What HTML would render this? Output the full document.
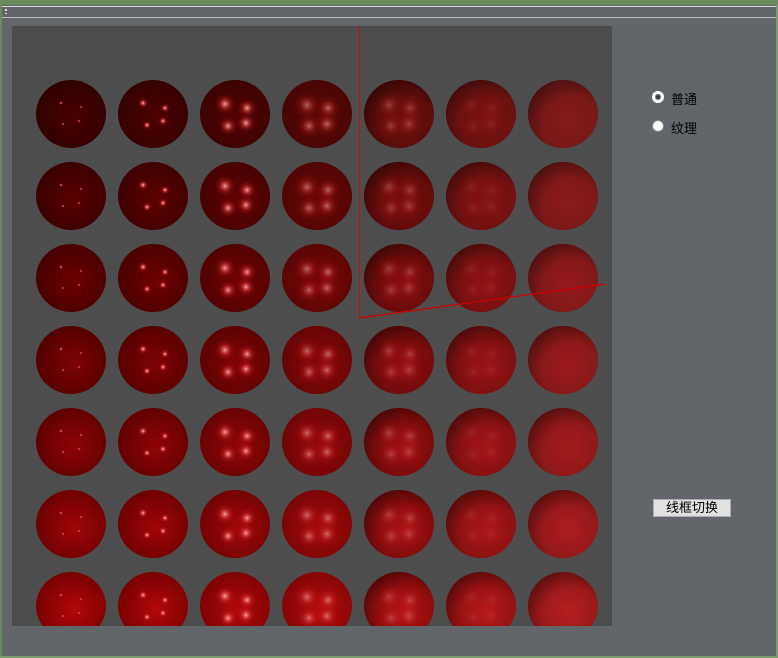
<!DOCTYPE html>
<html><head><meta charset="utf-8"><style>
*{margin:0;padding:0}
body{width:778px;height:658px;background:#62666a;position:relative;overflow:hidden;font-family:"Liberation Sans","Noto Sans CJK SC",sans-serif}
.top{position:absolute;left:0;top:0;width:778px;height:5px;background:#6b8a5e}
.l1{position:absolute;left:0;top:6px;width:778px;height:1px;background:#ddd}
.l2{position:absolute;left:2px;top:17px;width:776px;height:1px;background:#bbb}
.rb{position:absolute;right:0;top:5px;width:2px;height:653px;background:#7a9a70}
.bb{position:absolute;left:0;bottom:0;width:778px;height:2px;background:#7a9a70}
.lb{position:absolute;left:0;top:5px;width:2px;height:653px;background:#6b8a5e}
.radio{position:absolute;left:652px;width:12px;height:12px;border-radius:50%;background:#fff;border:1px solid #888;box-sizing:border-box}
.lab{position:absolute;left:671px;font-size:13px;color:#000}
.btn{position:absolute;left:653px;top:499px;width:78px;height:18px;background:#e1e1e1;border:1px solid #adadad;box-sizing:border-box;font-size:13px;text-align:center;line-height:16px;color:#000}
</style></head><body>
<div class="top"></div><div class="l1"></div><div class="l2"></div><div class="lb"></div><div class="rb"></div><div class="bb"></div>
<div style="position:absolute;left:5px;top:9px;width:2px;height:2px;background:#ddd"></div>
<div style="position:absolute;left:5px;top:13px;width:2px;height:1px;background:#ddd"></div>
<svg style="position:absolute;left:12px;top:26px" width="600" height="600" viewBox="12 26 600 600">
<defs>
<radialGradient id="r0" cx="55%" cy="55%" r="60%"><stop offset="0" stop-color="#4a0000"/><stop offset="1" stop-color="#2e0000"/></radialGradient>
<radialGradient id="r1" cx="55%" cy="55%" r="60%"><stop offset="0" stop-color="#5a0000"/><stop offset="1" stop-color="#380000"/></radialGradient>
<radialGradient id="r2" cx="55%" cy="55%" r="60%"><stop offset="0" stop-color="#6c0000"/><stop offset="1" stop-color="#440000"/></radialGradient>
<radialGradient id="r3" cx="55%" cy="55%" r="60%"><stop offset="0" stop-color="#7e0202"/><stop offset="1" stop-color="#500000"/></radialGradient>
<radialGradient id="r4" cx="55%" cy="55%" r="60%"><stop offset="0" stop-color="#900404"/><stop offset="1" stop-color="#5c0000"/></radialGradient>
<radialGradient id="r5" cx="55%" cy="55%" r="60%"><stop offset="0" stop-color="#a20606"/><stop offset="1" stop-color="#680000"/></radialGradient>
<radialGradient id="r6" cx="55%" cy="55%" r="60%"><stop offset="0" stop-color="#b40808"/><stop offset="1" stop-color="#740000"/></radialGradient>
<radialGradient id="hl"><stop offset="0" stop-color="#ffc8c8"/><stop offset="0.25" stop-color="#ff7070" stop-opacity="0.75"/><stop offset="0.6" stop-color="#e03030" stop-opacity="0.3"/><stop offset="1" stop-color="#d02020" stop-opacity="0"/></radialGradient>
<radialGradient id="sh" cx="62%" cy="65%" r="70%"><stop offset="0" stop-color="#000" stop-opacity="0"/><stop offset="0.6" stop-color="#000" stop-opacity="0.05"/><stop offset="1" stop-color="#000" stop-opacity="0.4"/></radialGradient>
<g id="h0"><circle cx="-10" cy="-11" r="2.2" fill="url(#hl)"/><circle cx="10" cy="-7" r="1.8" fill="url(#hl)"/><circle cx="-8" cy="10" r="1.8" fill="url(#hl)"/><circle cx="8" cy="7" r="1.8" fill="url(#hl)"/></g>
<g id="h1"><ellipse rx="35" ry="34" fill="#a01010" opacity="0.05"/><circle cx="-10" cy="-11" r="5" fill="url(#hl)"/><circle cx="12" cy="-6" r="4.5" fill="url(#hl)"/><circle cx="-6" cy="11" r="4.5" fill="url(#hl)"/><circle cx="10" cy="7" r="4.5" fill="url(#hl)"/></g>
<g id="h2" opacity="0.85"><ellipse rx="35" ry="34" fill="#b01515" opacity="0.12"/><circle cx="-10" cy="-10" r="10" fill="url(#hl)"/><circle cx="12" cy="-6" r="9" fill="url(#hl)"/><circle cx="-7" cy="12" r="9" fill="url(#hl)"/><circle cx="11" cy="9" r="9" fill="url(#hl)"/></g>
<g id="h3" opacity="0.55"><ellipse rx="35" ry="34" fill="#c02020" opacity="0.3"/><circle cx="-10" cy="-9" r="13" fill="url(#hl)"/><circle cx="11" cy="-6" r="12" fill="url(#hl)"/><circle cx="-8" cy="12" r="12" fill="url(#hl)"/><circle cx="10" cy="10" r="12" fill="url(#hl)"/></g>
<g id="h4"><ellipse rx="35" ry="34" fill="#b82424" opacity="0.32"/><g opacity="0.3"><circle cx="-10" cy="-9" r="15" fill="url(#hl)"/><circle cx="11" cy="-6" r="14" fill="url(#hl)"/><circle cx="-8" cy="12" r="14" fill="url(#hl)"/><circle cx="10" cy="10" r="14" fill="url(#hl)"/></g></g>
<g id="h5"><ellipse rx="35" ry="34" fill="#b82828" opacity="0.45"/><g opacity="0.1"><circle cx="-10" cy="-9" r="15" fill="url(#hl)"/><circle cx="11" cy="-6" r="14" fill="url(#hl)"/><circle cx="-8" cy="12" r="14" fill="url(#hl)"/><circle cx="10" cy="10" r="14" fill="url(#hl)"/></g></g>
<g id="h6"><ellipse rx="35" ry="34" fill="#b83030" opacity="0.55"/></g>
</defs>
<rect x="12" y="26" width="600" height="600" fill="#4d4d4d"/>
<g transform="translate(0,114)">
<ellipse cx="71" rx="35" ry="34" fill="url(#r0)"/><use href="#h0" x="71"/>
<ellipse cx="153" rx="35" ry="34" fill="url(#r0)"/><use href="#h1" x="153"/>
<ellipse cx="235" rx="35" ry="34" fill="url(#r0)"/><use href="#h2" x="235"/>
<ellipse cx="317" rx="35" ry="34" fill="url(#r0)"/><use href="#h3" x="317"/>
<ellipse cx="399" rx="35" ry="34" fill="url(#r0)"/><use href="#h4" x="399"/>
<ellipse cx="481" rx="35" ry="34" fill="url(#r0)"/><use href="#h5" x="481"/>
<ellipse cx="563" rx="35" ry="34" fill="url(#r0)"/><use href="#h6" x="563"/>
</g>
<g transform="translate(0,196)">
<ellipse cx="71" rx="35" ry="34" fill="url(#r1)"/><use href="#h0" x="71"/>
<ellipse cx="153" rx="35" ry="34" fill="url(#r1)"/><use href="#h1" x="153"/>
<ellipse cx="235" rx="35" ry="34" fill="url(#r1)"/><use href="#h2" x="235"/>
<ellipse cx="317" rx="35" ry="34" fill="url(#r1)"/><use href="#h3" x="317"/>
<ellipse cx="399" rx="35" ry="34" fill="url(#r1)"/><use href="#h4" x="399"/>
<ellipse cx="481" rx="35" ry="34" fill="url(#r1)"/><use href="#h5" x="481"/>
<ellipse cx="563" rx="35" ry="34" fill="url(#r1)"/><use href="#h6" x="563"/>
</g>
<g transform="translate(0,278)">
<ellipse cx="71" rx="35" ry="34" fill="url(#r2)"/><use href="#h0" x="71"/>
<ellipse cx="153" rx="35" ry="34" fill="url(#r2)"/><use href="#h1" x="153"/>
<ellipse cx="235" rx="35" ry="34" fill="url(#r2)"/><use href="#h2" x="235"/>
<ellipse cx="317" rx="35" ry="34" fill="url(#r2)"/><use href="#h3" x="317"/>
<ellipse cx="399" rx="35" ry="34" fill="url(#r2)"/><use href="#h4" x="399"/>
<ellipse cx="481" rx="35" ry="34" fill="url(#r2)"/><use href="#h5" x="481"/>
<ellipse cx="563" rx="35" ry="34" fill="url(#r2)"/><use href="#h6" x="563"/>
</g>
<g transform="translate(0,360)">
<ellipse cx="71" rx="35" ry="34" fill="url(#r3)"/><use href="#h0" x="71"/>
<ellipse cx="153" rx="35" ry="34" fill="url(#r3)"/><use href="#h1" x="153"/>
<ellipse cx="235" rx="35" ry="34" fill="url(#r3)"/><use href="#h2" x="235"/>
<ellipse cx="317" rx="35" ry="34" fill="url(#r3)"/><use href="#h3" x="317"/>
<ellipse cx="399" rx="35" ry="34" fill="url(#r3)"/><use href="#h4" x="399"/>
<ellipse cx="481" rx="35" ry="34" fill="url(#r3)"/><use href="#h5" x="481"/>
<ellipse cx="563" rx="35" ry="34" fill="url(#r3)"/><use href="#h6" x="563"/>
</g>
<g transform="translate(0,442)">
<ellipse cx="71" rx="35" ry="34" fill="url(#r4)"/><use href="#h0" x="71"/>
<ellipse cx="153" rx="35" ry="34" fill="url(#r4)"/><use href="#h1" x="153"/>
<ellipse cx="235" rx="35" ry="34" fill="url(#r4)"/><use href="#h2" x="235"/>
<ellipse cx="317" rx="35" ry="34" fill="url(#r4)"/><use href="#h3" x="317"/>
<ellipse cx="399" rx="35" ry="34" fill="url(#r4)"/><use href="#h4" x="399"/>
<ellipse cx="481" rx="35" ry="34" fill="url(#r4)"/><use href="#h5" x="481"/>
<ellipse cx="563" rx="35" ry="34" fill="url(#r4)"/><use href="#h6" x="563"/>
</g>
<g transform="translate(0,524)">
<ellipse cx="71" rx="35" ry="34" fill="url(#r5)"/><use href="#h0" x="71"/>
<ellipse cx="153" rx="35" ry="34" fill="url(#r5)"/><use href="#h1" x="153"/>
<ellipse cx="235" rx="35" ry="34" fill="url(#r5)"/><use href="#h2" x="235"/>
<ellipse cx="317" rx="35" ry="34" fill="url(#r5)"/><use href="#h3" x="317"/>
<ellipse cx="399" rx="35" ry="34" fill="url(#r5)"/><use href="#h4" x="399"/>
<ellipse cx="481" rx="35" ry="34" fill="url(#r5)"/><use href="#h5" x="481"/>
<ellipse cx="563" rx="35" ry="34" fill="url(#r5)"/><use href="#h6" x="563"/>
</g>
<g transform="translate(0,606)">
<ellipse cx="71" rx="35" ry="34" fill="url(#r6)"/><use href="#h0" x="71"/>
<ellipse cx="153" rx="35" ry="34" fill="url(#r6)"/><use href="#h1" x="153"/>
<ellipse cx="235" rx="35" ry="34" fill="url(#r6)"/><use href="#h2" x="235"/>
<ellipse cx="317" rx="35" ry="34" fill="url(#r6)"/><use href="#h3" x="317"/>
<ellipse cx="399" rx="35" ry="34" fill="url(#r6)"/><use href="#h4" x="399"/>
<ellipse cx="481" rx="35" ry="34" fill="url(#r6)"/><use href="#h5" x="481"/>
<ellipse cx="563" rx="35" ry="34" fill="url(#r6)"/><use href="#h6" x="563"/>
</g>
<g fill="url(#sh)">
<g transform="translate(0,114)"><ellipse cx="399" rx="35" ry="34"/><ellipse cx="481" rx="35" ry="34"/><ellipse cx="563" rx="35" ry="34"/></g>
<g transform="translate(0,196)"><ellipse cx="399" rx="35" ry="34"/><ellipse cx="481" rx="35" ry="34"/><ellipse cx="563" rx="35" ry="34"/></g>
<g transform="translate(0,278)"><ellipse cx="399" rx="35" ry="34"/><ellipse cx="481" rx="35" ry="34"/><ellipse cx="563" rx="35" ry="34"/></g>
<g transform="translate(0,360)"><ellipse cx="399" rx="35" ry="34"/><ellipse cx="481" rx="35" ry="34"/><ellipse cx="563" rx="35" ry="34"/></g>
<g transform="translate(0,442)"><ellipse cx="399" rx="35" ry="34"/><ellipse cx="481" rx="35" ry="34"/><ellipse cx="563" rx="35" ry="34"/></g>
<g transform="translate(0,524)"><ellipse cx="399" rx="35" ry="34"/><ellipse cx="481" rx="35" ry="34"/><ellipse cx="563" rx="35" ry="34"/></g>
<g transform="translate(0,606)"><ellipse cx="399" rx="35" ry="34"/><ellipse cx="481" rx="35" ry="34"/><ellipse cx="563" rx="35" ry="34"/></g>
</g>
<line x1="359.5" y1="26" x2="359.5" y2="318" stroke="#c01010" stroke-width="1"/>
<line x1="359" y1="318" x2="606" y2="284" stroke="#d00000" stroke-width="1.2"/>
</svg>
<div class="radio" style="top:91px;border:3px solid #fff;box-shadow:0 0 0 1px #777 inset;background:#3a3a3a"></div>
<div class="lab" style="top:89px">普通</div>
<div class="radio" style="top:120px"></div>
<div class="lab" style="top:118px">纹理</div>
<div class="btn">线框切换</div>
</body></html>
